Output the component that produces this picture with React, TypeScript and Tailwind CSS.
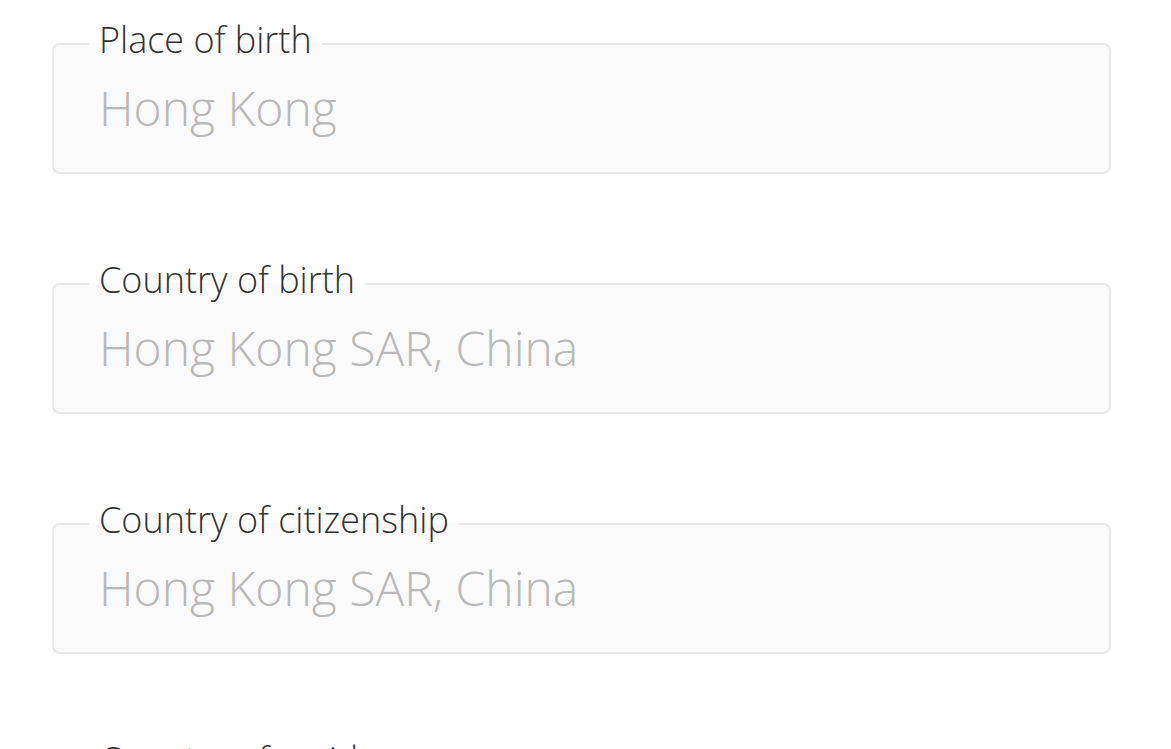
import React from "react";

const fields = [
  { label: "Place of birth", value: "Hong Kong" },
  { label: "Country of birth", value: "Hong Kong SAR, China" },
  { label: "Country of citizenship", value: "Hong Kong SAR, China" },
  { label: "Country of residence", value: "Hong Kong SAR, China" },
];

export default function App() {
  return (
    <div
      className="min-h-screen bg-white pt-[18px] pl-[52px] pr-[60px] overflow-hidden"
      style={{ fontFamily: '"Open Sans", "Liberation Sans", sans-serif', height: 749 }}
    >
      <div className="flex flex-col gap-[84.5px]">
        {fields.map((f) => (
          <fieldset
            key={f.label}
            className="border-2 border-[#e8e8e8] rounded-[8px] bg-[#fafafa] pl-0 pt-[10px] pb-[35px] m-0 min-w-0"
          >
            <legend className="ml-[35px] px-[10px] pb-[8px] text-[36px] leading-[43px] font-light text-[#333333]">
              {f.label}
            </legend>
            <div className="pl-[45px] text-[48px] leading-[57.6px] font-light text-[#b8b8b8]">
              {f.value}
            </div>
          </fieldset>
        ))}
      </div>
    </div>
  );
}
